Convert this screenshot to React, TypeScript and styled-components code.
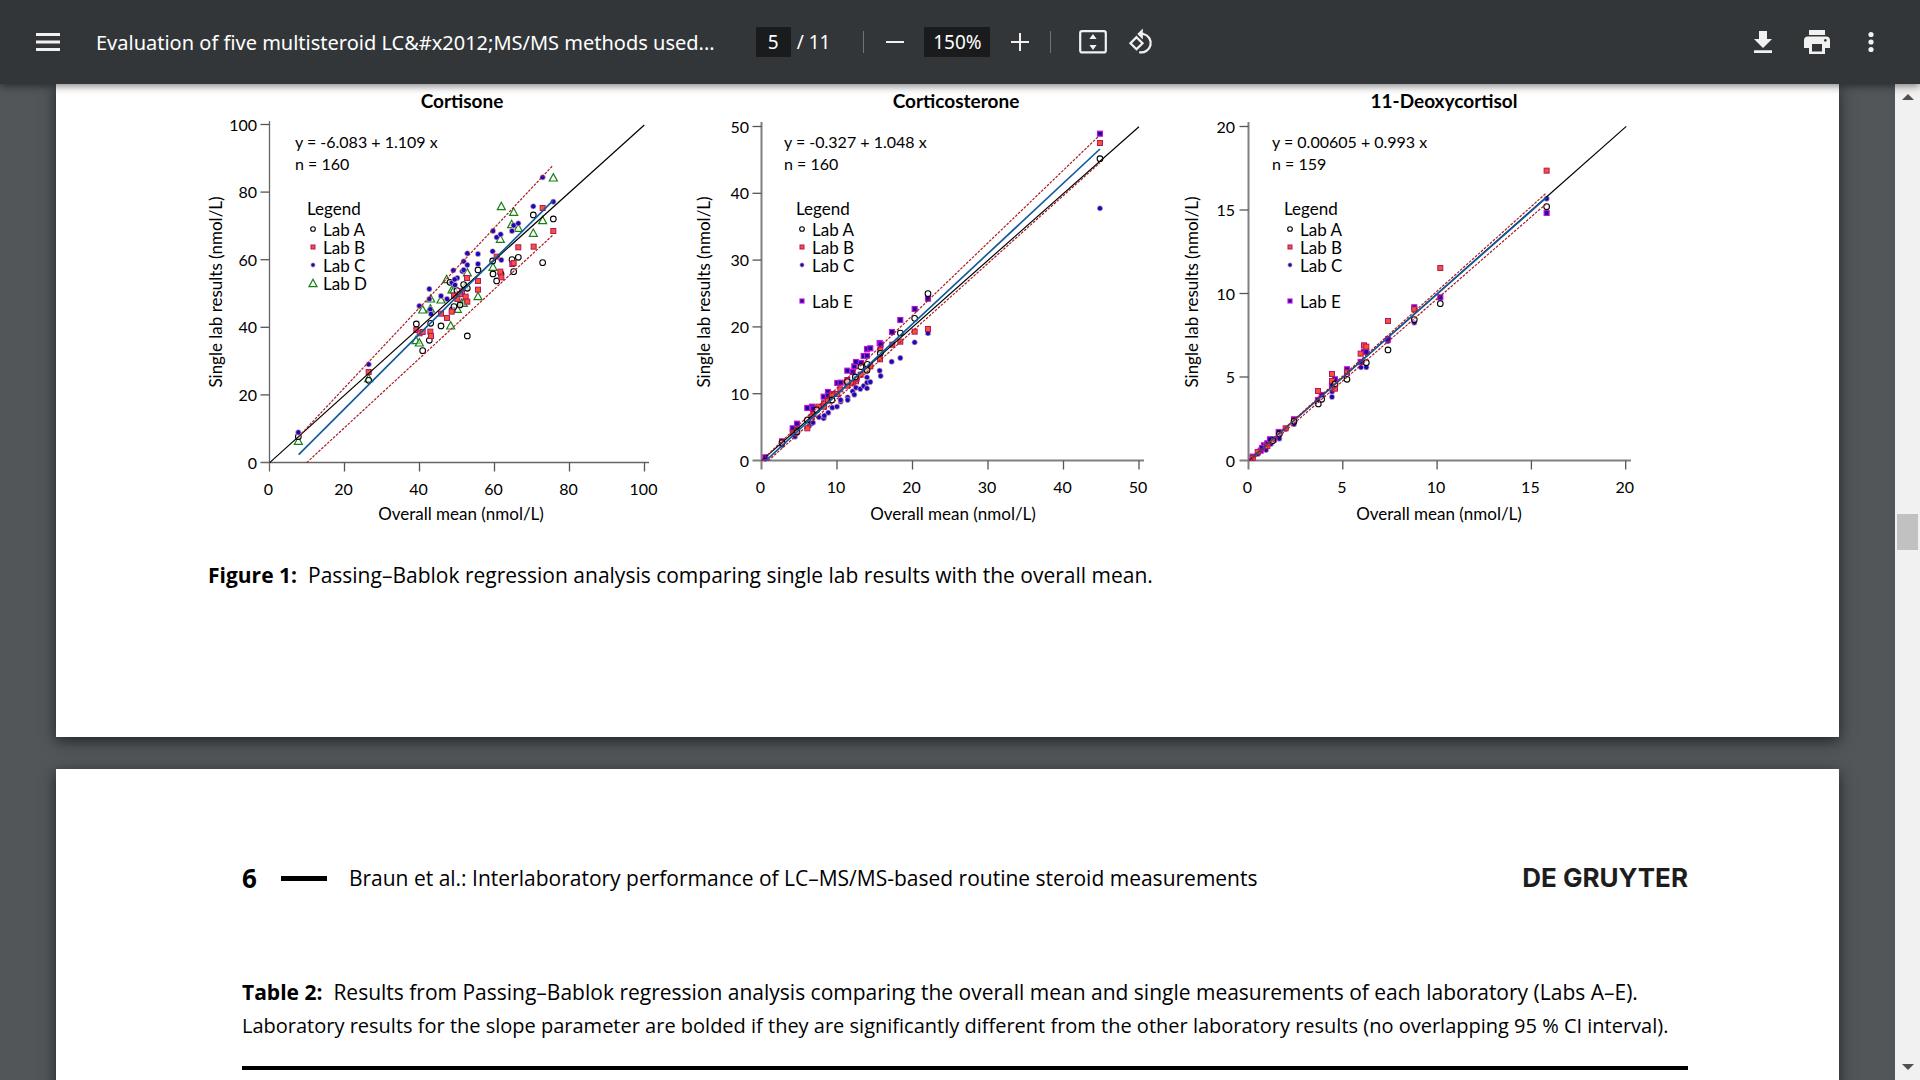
import React from "react";
import styled, { createGlobalStyle } from "styled-components";

const uiFont = `"Noto Sans", "Open Sans", sans-serif`;
const textFont = `"Open Sans", "Noto Sans", sans-serif`;
const chartFont = `Lato, "Open Sans", sans-serif`;

const GlobalStyle = createGlobalStyle`
  * { box-sizing: border-box; }
  body { margin: 0; background: #525659; font-family: ${uiFont}; }
  h1, h2, p, figure { margin: 0; font-weight: 400; }
`;

/* ---------- viewer shell ---------- */

const Viewer = styled.div`
  display: flex;
  flex-direction: column;
  height: 100vh;
  overflow: hidden;
`;

const Toolbar = styled.header`
  display: grid;
  grid-template-columns: 1fr auto 1fr;
  align-items: center;
  flex: none;
  height: 84px;
  padding: 0 32px 0 26px;
  background: #323639;
  color: #fff;
  box-shadow: 0 2px 8px rgba(0, 0, 0, 0.5);
  z-index: 1;
`;

const ToolGroup = styled.div<{ $gap: number; $end?: boolean }>`
  display: flex;
  align-items: center;
  justify-content: ${(p) => (p.$end ? "flex-end" : "flex-start")};
  gap: ${(p) => p.$gap}px;
  min-width: 0;
`;

const ControlRow = styled.div`
  display: flex;
  align-items: center;
`;

const IconButton = styled.button<{ $width?: number }>`
  display: grid;
  place-items: center;
  flex: none;
  width: ${(p) => p.$width || 34}px;
  height: 34px;
  padding: 0;
  border: 0;
  background: none;
  color: #f1f1f1;
  svg { display: block; }
`;

const DocTitle = styled.h1`
  padding-top: 2px;
  font-size: 20px;
  line-height: 28px;
  white-space: nowrap;
`;

const Field = styled.input<{ $width: number }>`
  width: ${(p) => p.$width}px;
  height: 30px;
  padding: 0;
  border: 0;
  background: #191b1c;
  color: #fff;
  font: 400 19px/30px ${uiFont};
  text-align: center;
`;

const PageCount = styled.span`
  margin-left: 6px;
  font-size: 19px;
  line-height: 30px;
  white-space: pre;
`;

const Divider = styled.span<{ $before: number; $after: number }>`
  width: 1px;
  height: 22px;
  margin: 0 ${(p) => p.$after}px 0 ${(p) => p.$before}px;
  background: #707376;
`;

const Spacer = styled.span<{ $width: number }>`
  width: ${(p) => p.$width}px;
`;

const Workspace = styled.div`
  display: flex;
  flex: 1;
  min-height: 0;
`;

const Pages = styled.main`
  flex: 1;
  min-width: 0;
  padding: 0 56px;
  overflow: hidden;
`;

const Sheet = styled.section<{ $pad: string; $gapAfter?: number }>`
  padding: ${(p) => p.$pad};
  margin-bottom: ${(p) => p.$gapAfter || 0}px;
  background: #fff;
  color: #000;
  box-shadow: 0 4px 14px rgba(0, 0, 0, 0.6);
`;

const Scrollbar = styled.div`
  display: flex;
  flex-direction: column;
  flex: none;
  align-items: center;
  width: 25px;
  padding: 10px 0;
  background: #f1f1f1;
`;

const Arrow = styled.svg`
  display: block;
  fill: #505050;
`;

const Track = styled.div`
  display: flex;
  flex-direction: column;
  flex: 1;
  padding-bottom: 4px;
`;

const TrackSpace = styled.div<{ $share: number }>`
  flex: ${(p) => p.$share};
`;

const Thumb = styled.div`
  width: 21px;
  height: 36px;
  background: #c1c1c1;
`;

/* ---------- document pieces ---------- */

const ChartRow = styled.div`
  display: grid;
  grid-template-columns: repeat(3, 1fr);
  max-width: 1464px;
  svg { display: block; width: 100%; height: auto; }
  text { font-family: ${chartFont}; fill: #000; }
`;

const Caption = styled.figcaption`
  padding: 18px 8px 145px;
  font: 400 21px/34px ${textFont};
`;

const Label = styled.b`
  margin-right: 11px;
  font-weight: 700;
`;

const RunningHead = styled.header`
  display: flex;
  align-items: center;
  gap: 22px;
  margin-bottom: 81px;
  font: 400 21px/34px ${textFont};
`;

const PageNumber = styled.b`
  margin-right: 2px;
  font: 700 26px/34px ${uiFont};
`;

const Dash = styled.span`
  width: 46px;
  height: 5px;
  background: #000;
`;

const Publisher = styled.strong`
  margin-left: auto;
  color: #1d1d20;
  font: 700 26px/34px Inter, "Open Sans", sans-serif;
`;

const TableTitle = styled.p<{ $small?: boolean }>`
  font: 400 ${(p) => (p.$small ? 20 : 21)}px/33px ${textFont};
`;

const TableRule = styled.hr`
  height: 4px;
  margin: 24px 0 0;
  border: 0;
  background: #000;
`;

/* ---------- charts ---------- */

type Lab = "A" | "B" | "C" | "D" | "E";
type Pt = [number, number];
type Seg = [number, number, number, number];

interface Chart {
  title: string;
  titleX: number;
  meanX: number;
  equation: string;
  count: string;
  textX: number;
  yTitleX: number;
  axisX: number;
  axisY: number;
  top: number;
  right: number;
  stepX: number;
  stepY: number;
  xTicks: string[];
  yTicks: string[];
  labelX: number;
  thick?: boolean;
  /* marker layer is plotted at three units per chart unit from this corner */
  layer: Pt;
  identity: Seg;
  fit: Seg;
  bounds: Seg[];
  legend: Lab[];
  series: [Lab, Pt[]][];
}

const charts: Chart[] = [
  {
    title: "Cortisone",
    titleX: 262,
    meanX: 261,
    equation: "y = -6.083 + 1.109 x",
    count: "n = 160",
    textX: 95,
    yTitleX: 22,
    axisX: 69.5,
    axisY: 378.5,
    top: 37,
    right: 449,
    stepX: 75,
    stepY: 67.6,
    xTicks: ["0", "20", "40", "60", "80", "100"],
    yTicks: ["0", "20", "40", "60", "80", "100"],
    labelX: 57,
    layer: [180, 36],
    identity: [-331, 1028, 793, 15],
    fit: [-244, 1004, 519, 242],
    bounds: [[-244, 950, 519, 136], [-220, 1028, 519, 345]],
    legend: ["A", "B", "C", "D"],
    series: [
      ["D", [[-245, 962], [-34, 774], [108, 660], [118, 667], [128, 568], [152, 535], [183, 538], [212, 616], [200, 477], [216, 508], [232, 566], [222, 508], [262, 457], [255, 500], [245, 548], [294, 528], [339, 440], [361, 356], [364, 258], [401, 275], [395, 312], [415, 323], [460, 338], [488, 300], [520, 172], [250, 548], [151, 565]]],
      ["A", [[-34, 781], [-245, 950], [109, 612], [128, 692], [148, 661], [152, 610], [183, 618], [262, 648], [294, 450], [339, 462], [350, 483], [363, 462], [396, 419], [401, 455], [415, 412], [460, 285], [520, 297], [488, 428], [338, 423], [210, 487], [217, 570], [231, 512], [251, 494], [262, 505], [240, 555], [222, 560]]],
      ["B", [[-34, 756], [109, 630], [119, 640], [128, 636], [151, 635], [153, 648], [183, 581], [201, 594], [215, 575], [232, 537], [222, 527], [257, 530], [262, 545], [261, 474], [294, 483], [294, 509], [361, 455], [364, 472], [397, 432], [401, 429], [415, 382], [461, 380], [488, 264], [520, 333], [350, 410], [246, 514], [240, 522]]],
      ["C", [[-245, 937], [-34, 733], [118, 558], [148, 507], [151, 568], [153, 582], [148, 537], [183, 528], [201, 537], [220, 451], [232, 474], [216, 488], [225, 495], [262, 400], [251, 424], [262, 435], [247, 454], [251, 450], [294, 402], [294, 432], [338, 394], [339, 333], [350, 352], [362, 343], [364, 420], [396, 333], [401, 316], [415, 310], [460, 259], [488, 172], [520, 245], [224, 478]]],
    ],
  },
  {
    title: "Corticosterone",
    titleX: 268,
    meanX: 265,
    equation: "y = -0.327 + 1.048 x",
    count: "n = 160",
    textX: 96,
    yTitleX: 22,
    axisX: 73.5,
    axisY: 376.5,
    top: 38,
    right: 456,
    stepX: 75.5,
    stepY: 66.8,
    xTicks: ["0", "10", "20", "30", "40", "50"],
    yTicks: ["0", "10", "20", "30", "40", "50"],
    labelX: 61,
    thick: true,
    layer: [62, 166],
    identity: [35, 632, 1167, -370],
    fit: [48, 632, 1050, -303],
    bounds: [[35, 632, 1050, -345], [55, 632, 1050, -262]],
    legend: ["A", "B", "C", "E"],
    series: [
      ["C", [[46, 627], [96, 586], [135, 560], [141, 550], [178, 527], [184, 521], [189, 518], [207, 502], [221, 505], [223, 497], [235, 488], [247, 473], [261, 470], [272, 455], [272, 450], [293, 442], [293, 450], [308, 424], [313, 434], [318, 413], [331, 417], [341, 408], [351, 382], [351, 398], [351, 415], [361, 396], [389, 362], [392, 378], [425, 335], [451, 324], [494, 277], [534, 250], [1050, -125]]],
      ["E", [[46, 622], [96, 574], [128, 535], [141, 521], [172, 474], [186, 470], [189, 476], [221, 440], [234, 426], [234, 437], [262, 399], [272, 398], [292, 362], [308, 366], [313, 349], [318, 336], [333, 339], [341, 318], [351, 317], [351, 297], [361, 295], [389, 279], [392, 283], [426, 246], [451, 210], [494, 177], [534, 146], [1050, -349]]],
      ["B", [[96, 577], [141, 540], [128, 548], [172, 535], [190, 492], [205, 470], [222, 460], [222, 470], [234, 452], [246, 432], [262, 432], [271, 418], [292, 390], [292, 407], [308, 400], [318, 394], [320, 386], [332, 374], [350, 358], [361, 349], [391, 300], [390, 328], [427, 284], [451, 275], [494, 245], [534, 237], [1050, -321], [185, 500], [246, 436]]],
      ["A", [[96, 578], [141, 545], [172, 510], [246, 450], [391, 310], [351, 361], [333, 350], [352, 343], [451, 249], [494, 205], [534, 131], [1050, -274], [200, 480], [292, 395], [316, 381]]],
    ],
  },
  {
    title: "11-Deoxycortisol",
    titleX: 268,
    meanX: 263,
    equation: "y = 0.00605 + 0.993 x",
    count: "n = 159",
    textX: 96,
    yTitleX: 22,
    axisX: 72.5,
    axisY: 376.5,
    top: 38,
    right: 455,
    stepX: 94.3,
    stepY: 83.5,
    xTicks: ["0", "5", "10", "15", "20"],
    yTicks: ["0", "5", "10", "15", "20"],
    labelX: 59,
    thick: true,
    layer: [4, -4],
    identity: [207, 1141, 1339, 139],
    fit: [215, 1134, 1100, 352],
    bounds: [[207, 1141, 1098, 340], [215, 1141, 1098, 372]],
    legend: ["A", "B", "C", "E"],
    series: [
      ["C", [[234, 1122], [258, 1110], [273, 1092], [282, 1080], [298, 1076], [317, 1047], [342, 1033], [456, 951], [456, 935], [543, 862], [559, 862], [624, 784], [703, 728], [781, 655], [1100, 356], [415, 958]]],
      ["E", [[218, 1130], [242, 1112], [252, 1096], [262, 1090], [270, 1078], [282, 1078], [296, 1056], [342, 1018], [425, 945], [414, 960], [456, 916], [465, 898], [501, 868], [542, 846], [552, 815], [559, 816], [624, 778], [703, 682], [781, 652], [1100, 399], [246, 1104], [258, 1098]]],
      ["B", [[218, 1134], [414, 933], [456, 882], [456, 903], [465, 926], [501, 877], [542, 821], [552, 796], [559, 800], [624, 723], [703, 688], [781, 564], [1100, 272], [342, 1022], [317, 1045], [233, 1116], [262, 1098]]],
      ["A", [[415, 972], [425, 958], [465, 912], [501, 898], [559, 848], [624, 810], [703, 719], [781, 671], [1100, 380], [342, 1024], [298, 1062], [278, 1082]]],
    ],
  },
];

function Marker({ lab, x, y, small }: { lab: Lab; x: number; y: number; small?: boolean }) {
  const h = small ? 6 : 7.5;
  switch (lab) {
    case "A":
      return <circle cx={x} cy={y} r={small ? 7 : 8.5} fill="#fff" fillOpacity={0.6} stroke="#000" strokeWidth={3.2} />;
    case "B":
      return <rect x={x - h} y={y - h} width={h * 2} height={h * 2} fill="#f4562a" stroke="#b3136b" strokeWidth={3} />;
    case "C":
      return <circle cx={x} cy={y} r={small ? 6.5 : 8} fill="#1708c4" stroke="#f0b49c" strokeWidth={2} />;
    case "D":
      return <path d={`M${x} ${y - 11}L${x + 12} ${y + 11}H${x - 12}Z`} fill="#fff" fillOpacity={0.5} stroke="#158015" strokeWidth={3.6} />;
    case "E":
      return <rect x={x - h} y={y - h} width={h * 2} height={h * 2} fill="#1a0a9c" stroke="#c511dc" strokeWidth={3.4} />;
  }
}

function Line({ seg, color, width, dash }: { seg: Seg; color: string; width: number; dash?: string }) {
  return <line x1={seg[0]} y1={seg[1]} x2={seg[2]} y2={seg[3]} stroke={color} strokeWidth={width} strokeDasharray={dash} />;
}

const legendRow: Record<Lab, number> = { A: 0, B: 1, C: 2, D: 3, E: 4 };

function RegressionChart({ c }: { c: Chart }) {
  const axis = { stroke: c.thick ? "#808080" : "#666", strokeWidth: c.thick ? 2 : 1.3 };
  return (
    <svg viewBox="0 0 488 456" role="img" aria-label={`${c.title} regression`}>
      <text x={c.titleX} y={24} fontSize={19} fontWeight={700} textAnchor="middle">{c.title}</text>
      <g {...axis}>
        <line x1={c.axisX} x2={c.axisX} y1={c.top} y2={c.axisY + 9} />
        <line x1={c.axisX - 9} x2={c.right} y1={c.axisY} y2={c.axisY} />
      </g>
      <g stroke="#555" strokeWidth={1.3}>
        {c.xTicks.slice(1).map((t, i) => (
          <line key={t} x1={c.axisX + c.stepX * (i + 1)} x2={c.axisX + c.stepX * (i + 1)} y1={c.axisY} y2={c.axisY + 9} />
        ))}
        {c.yTicks.slice(1).map((t, i) => (
          <line key={t} x1={c.axisX - 9} x2={c.axisX} y1={c.axisY - c.stepY * (i + 1)} y2={c.axisY - c.stepY * (i + 1)} />
        ))}
      </g>
      <g fontSize={16}>
        {c.xTicks.map((t, i) => (
          <text key={t} x={c.axisX - 1 + c.stepX * i} y={c.axisY + 32} textAnchor="middle">{t}</text>
        ))}
        {c.yTicks.map((t, i) => (
          <text key={t} x={c.labelX} y={c.axisY + 6 - c.stepY * i} textAnchor="end">{t}</text>
        ))}
        <text x={c.textX} y={64}>{c.equation}</text>
        <text x={c.textX} y={86}>{c.count}</text>
      </g>
      <g fontSize={17}>
        <text x={c.meanX} y={436} textAnchor="middle">Overall mean (nmol/L)</text>
        <text transform={`translate(${c.yTitleX} 208) rotate(-90)`} textAnchor="middle">Single lab results (nmol/L)</text>
        <text x={c.textX + 12} y={131}>Legend</text>
        {c.legend.map((lab) => (
          <text key={lab} x={c.textX + 28} y={152 + 18 * legendRow[lab]}>Lab {lab}</text>
        ))}
      </g>
      <g transform={`translate(${c.textX + 18} 145) scale(0.3333)`}>
        {c.legend.map((lab) => (
          <Marker key={lab} lab={lab} x={0} y={54 * legendRow[lab]} small />
        ))}
      </g>
      <g transform={`translate(${c.layer[0]} ${c.layer[1]}) scale(0.3333)`}>
        {c.series.map(([lab, pts]) => pts.map(([x, y], i) => <Marker key={lab + i} lab={lab} x={x} y={y} />))}
        <Line seg={c.identity} color="#000" width={3.6} />
        <Line seg={c.fit} color="#125a9e" width={5} />
        {c.bounds.map((b, i) => (
          <Line key={i} seg={b} color="#a81c24" width={3.6} dash="8 4" />
        ))}
      </g>
    </svg>
  );
}

/* ---------- toolbar glyphs ---------- */

const MenuGlyph = () => (
  <svg width="24" height="20" viewBox="0 0 24 20" fill="currentColor">
    <path d="M0 1h24v3H0zM0 8.500h24v3H0zM0 16h24v3H0z" />
  </svg>
);
const MinusGlyph = () => (
  <svg width="18" height="18" viewBox="0 0 18 18" fill="currentColor"><path d="M0 8h18v2H0z" /></svg>
);
const PlusGlyph = () => (
  <svg width="18" height="18" viewBox="0 0 18 18" fill="currentColor"><path d="M8 0h2v8h8v2h-8v8H8v-8H0V8h8z" /></svg>
);
const FitGlyph = () => (
  <svg width="28" height="24" viewBox="0 0 28 24">
    <rect x="1.200" y="1.200" width="25.600" height="21.200" rx="2" fill="none" stroke="currentColor" strokeWidth="2.200" />
    <path d="M14 4l3.600 5h-7.200zM14 20l3.600-5h-7.200z" fill="currentColor" />
  </svg>
);
const RotateGlyph = () => (
  <svg width="28" height="28" viewBox="0 0 28 28" fill="none" stroke="currentColor" strokeWidth="2.300">
    <path d="M9.500 9.200l6 6-6 6-6-6z" />
    <path d="M14 6h2.500a9.300 9.300 0 1 1-4.300 18.200" />
    <path d="M15.800 .5v11L10.300 6z" fill="currentColor" stroke="none" />
  </svg>
);
const DownloadGlyph = () => (
  <svg width="18" height="22" viewBox="0 0 18 22" fill="currentColor">
    <path d="M5 0h8v8h5l-9 9-9-9h5zM0 19.300h18V22H0z" />
  </svg>
);
const PrintGlyph = () => (
  <svg width="26" height="24" viewBox="0 0 26 24">
    <path fill="currentColor" fillRule="evenodd" d="M5 0h16v5H5zM4 6.500h18a4 4 0 0 1 4 4V18h-5v6H5v-6H0v-7.500a4 4 0 0 1 4-4zM8 14v7.500h10V14zM21.300 9a1.400 1.400 0 1 0 .1 0z" />
  </svg>
);
const MoreGlyph = () => (
  <svg width="6" height="22" viewBox="0 0 6 22" fill="currentColor">
    <circle cx="3" cy="3.500" r="2.600" /><circle cx="3" cy="11" r="2.600" /><circle cx="3" cy="18.500" r="2.600" />
  </svg>
);

export default function App() {
  return (
    <Viewer>
      <GlobalStyle />
      <Toolbar>
        <ToolGroup $gap={26}>
          <IconButton $width={44} aria-label="Menu"><MenuGlyph /></IconButton>
          <DocTitle>{"Evaluation of five multisteroid LC&#x2012;MS/MS methods used..."}</DocTitle>
        </ToolGroup>
        <ControlRow>
          <Field $width={35} aria-label="Page number" defaultValue="5" />
          <PageCount>/ 11</PageCount>
          <Divider $before={33} $after={14} />
          <IconButton aria-label="Zoom out"><MinusGlyph /></IconButton>
          <Spacer $width={12} />
          <Field $width={66} aria-label="Zoom level" defaultValue="150%" />
          <Spacer $width={13} />
          <IconButton aria-label="Zoom in"><PlusGlyph /></IconButton>
          <Divider $before={13} $after={25} />
          <IconButton aria-label="Fit to page"><FitGlyph /></IconButton>
          <Spacer $width={14} />
          <IconButton aria-label="Rotate counterclockwise"><RotateGlyph /></IconButton>
        </ControlRow>
        <ToolGroup $gap={20} $end>
          <IconButton aria-label="Download"><DownloadGlyph /></IconButton>
          <IconButton aria-label="Print"><PrintGlyph /></IconButton>
          <IconButton aria-label="More actions"><MoreGlyph /></IconButton>
        </ToolGroup>
      </Toolbar>
      <Workspace>
        <Pages>
          <Sheet $pad="0 144px 0" $gapAfter={32}>
            <figure>
              <ChartRow>
                {charts.map((c) => <RegressionChart key={c.title} c={c} />)}
              </ChartRow>
              <Caption>
                <Label>Figure 1:</Label>
                Passing–Bablok regression analysis comparing single lab results with the overall mean.
              </Caption>
            </figure>
          </Sheet>
          <Sheet $pad="92px 151px 200px 186px">
            <RunningHead>
              <PageNumber>6</PageNumber>
              <Dash />
              <span>Braun et al.: Interlaboratory performance of LC–MS/MS-based routine steroid measurements</span>
              <Publisher>DE GRUYTER</Publisher>
            </RunningHead>
            <TableTitle>
              <Label>Table 2:</Label>
              Results from Passing–Bablok regression analysis comparing the overall mean and single measurements of each laboratory (Labs A–E).
            </TableTitle>
            <TableTitle $small>
              Laboratory results for the slope parameter are bolded if they are significantly different from the other laboratory results (no overlapping 95 % CI interval).
            </TableTitle>
            <TableRule />
          </Sheet>
        </Pages>
        <Scrollbar>
          <Arrow width="12" height="6" viewBox="0 0 12 6"><path d="M6 0l6 6H0z" /></Arrow>
          <Track>
            <TrackSpace $share={414} />
            <Thumb />
            <TrackSpace $share={510} />
          </Track>
          <Arrow width="12" height="6" viewBox="0 0 12 6"><path d="M6 6l6-6H0z" /></Arrow>
        </Scrollbar>
      </Workspace>
    </Viewer>
  );
}
